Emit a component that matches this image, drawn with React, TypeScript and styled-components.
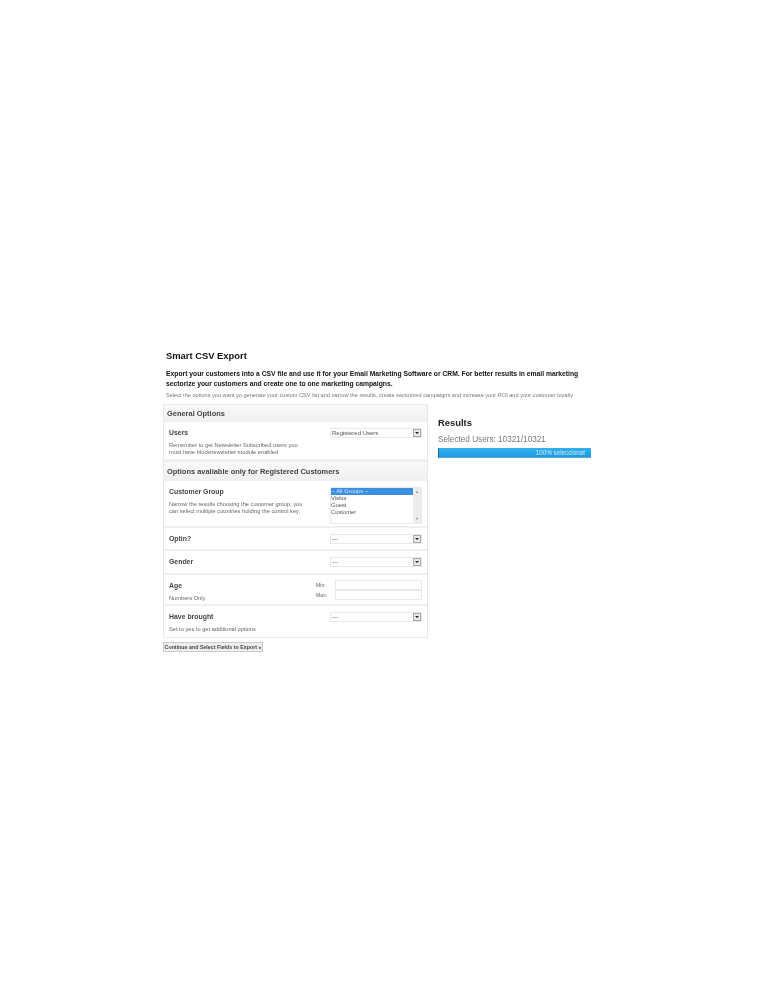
import React from 'react';
import styled, { createGlobalStyle } from 'styled-components';

const GlobalStyle = createGlobalStyle`
  html, body {
    margin: 0;
    padding: 0;
    background: #fff;
  }
  body {
    font-family: "Liberation Sans", Arial, sans-serif;
    color: #333;
  }
`;

const Page = styled.div`
  width: 771px;
  height: 1000px;
  overflow: hidden;
  padding: 349px 0 0 163px;
  box-sizing: border-box;
  filter: blur(0.25px);
`;

const Intro = styled.div`
  padding-left: 3px;
  width: 425px;
`;

const Title = styled.h1`
  margin: 0;
  font-size: 9.4px;
  line-height: 13px;
  font-weight: 700;
  color: #111;
`;

const Lead = styled.p`
  margin: 7px 0 0;
  font-size: 6.75px;
  line-height: 10px;
  font-weight: 700;
  color: #111;
  white-space: nowrap;
`;

const Hint = styled.p`
  margin: 2px 0 0;
  font-size: 5.6px;
  line-height: 9px;
  color: #777;
  white-space: nowrap;
`;

const Columns = styled.div`
  display: flex;
  gap: 10px;
  margin-top: 4px;
`;

const LeftColumn = styled.div`
  width: 265px;
`;

const Panel = styled.div`
  border: 1px solid #e8e8e8;
  border-top: 0;
  box-sizing: border-box;
  height: 234px;
`;

const SectionHeader = styled.div<{ $height: number }>`
  height: ${({ $height }) => $height}px;
  line-height: ${({ $height }) => $height}px;
  padding-left: 3px;
  font-size: 7.45px;
  font-weight: 700;
  color: #444;
  background: linear-gradient(#fafafa, #efefef);
  border-top: 1px solid #ececec;
  box-sizing: border-box;
`;

const Row = styled.div<{ $height: number }>`
  display: flex;
  justify-content: space-between;
  height: ${({ $height }) => $height}px;
  padding: 6px 5px 0 5px;
  box-sizing: border-box;
  border-bottom: 2px solid #f0f0f0;
  &:last-child {
    border-bottom: 0;
  }
`;

const RowText = styled.div`
  width: 145px;
`;

const RowLabel = styled.div`
  font-size: 6.9px;
  line-height: 10px;
  font-weight: 700;
  color: #444;
`;

const RowHelp = styled.div`
  margin-top: 4px;
  font-size: 5.7px;
  line-height: 7.3px;
  color: #666;
  white-space: nowrap;
`;

const Select = styled.div`
  display: flex;
  align-items: center;
  justify-content: space-between;
  width: 89px;
  height: 8px;
  padding-left: 1px;
  border: 1px solid #e8e8e8;
  box-sizing: content-box;
  font-size: 6px;
  color: #555;
`;

const SelectArrow = styled.span`
  display: flex;
  align-items: center;
  justify-content: center;
  width: 8px;
  height: 8px;
  background: #e8e8e8;
  border: 1px solid #aaa;
  box-sizing: border-box;
  &::after {
    content: '';
    border-left: 2px solid transparent;
    border-right: 2px solid transparent;
    border-top: 2px solid #222;
  }
`;

const ListBox = styled.div`
  display: flex;
  width: 90px;
  height: 35px;
  border: 1px solid #e8e8e8;
  font-size: 5.8px;
  line-height: 7px;
  color: #555;
`;

const ListItems = styled.div`
  flex: 1;
`;

const ListItem = styled.div<{ $selected?: boolean }>`
  background: ${({ $selected }) => ($selected ? '#3b8fe0' : 'transparent')};
  color: ${({ $selected }) => ($selected ? '#cfe4fa' : '#555')};
`;

const ListScroll = styled.div`
  display: flex;
  flex-direction: column;
  justify-content: space-between;
  align-items: center;
  width: 8px;
  padding: 2px 0;
  box-sizing: border-box;
  background: #ececec;
  font-size: 4px;
  line-height: 4px;
  color: #888;
`;

const RangeFields = styled.div`
  display: grid;
  grid-template-columns: 18px 87px;
  grid-auto-rows: 10px;
  column-gap: 1px;
  align-items: center;
  align-self: flex-start;
  margin-top: -1px;
`;

const RangeLabel = styled.label`
  font-size: 5.2px;
  color: #666;
`;

const RangeInput = styled.div`
  height: 10px;
  border: 1px solid #e8e8e8;
  box-sizing: border-box;
`;

const SubmitButton = styled.button`
  display: block;
  width: 100px;
  height: 10px;
  margin-top: 4px;
  padding: 0;
  font-family: inherit;
  font-size: 5.3px;
  font-weight: 700;
  line-height: 8px;
  color: #444;
  background: #eeeeee;
  border: 1px solid #cccccc;
  white-space: nowrap;
`;

const Results = styled.div`
  width: 153px;
  padding-top: 13px;
`;

const ResultsTitle = styled.h2`
  margin: 0;
  font-size: 9.4px;
  line-height: 12px;
  font-weight: 700;
  color: #222;
`;

const SelectedUsers = styled.div`
  margin-top: 6px;
  font-size: 8.2px;
  line-height: 10px;
  color: #777;
`;

const ProgressBar = styled.div`
  height: 10px;
  margin-top: 3px;
  padding-right: 6px;
  box-sizing: border-box;
  background: linear-gradient(#35b0ee, #1a9be0);
  border-left: 1px solid #146a9e;
  border-bottom: 1px solid #5ba7d4;
  font-size: 6.3px;
  line-height: 10px;
  text-align: right;
  color: #cdeaf9;
`;

const DropDown: React.FC<{ value: string }> = ({ value }) => (
  <Select>
    {value}
    <SelectArrow />
  </Select>
);

const App: React.FC = () => (
  <Page>
    <GlobalStyle />
    <Intro>
      <Title>Smart CSV Export</Title>
      <Lead>
        Export your customers into a CSV file and use it for your Email Marketing Software or CRM. For better results in email marketing
        <br />
        sectorize your customers and create one to one marketing campaigns.
      </Lead>
      <Hint>
        Select the options you want yo generate your custom CSV list and narrow the results, create sectorized campaigns and increase your ROI and your customer loyalty
      </Hint>
    </Intro>
    <Columns>
      <LeftColumn>
        <Panel>
          <SectionHeader $height={18}>General Options</SectionHeader>
          <Row $height={39}>
            <RowText>
              <RowLabel>Users</RowLabel>
              <RowHelp>
                Remember to get Newsletter Subscribed users you
                <br />
                must have blocknewsletter module enabled
              </RowHelp>
            </RowText>
            <DropDown value="Registered Users" />
          </Row>
          <SectionHeader $height={20}>Options avaliable only for Registered Customers</SectionHeader>
          <Row $height={47}>
            <RowText>
              <RowLabel>Customer Group</RowLabel>
              <RowHelp>
                Narrow the results choosing the customer group, you
                <br />
                can select multiple countries holding the control key.
              </RowHelp>
            </RowText>
            <ListBox>
              <ListItems>
                <ListItem $selected>-- All Groups --</ListItem>
                <ListItem>Visitor</ListItem>
                <ListItem>Guest</ListItem>
                <ListItem>Customer</ListItem>
              </ListItems>
              <ListScroll>
                <span>▴</span>
                <span>▾</span>
              </ListScroll>
            </ListBox>
          </Row>
          <Row $height={23}>
            <RowLabel>Optin?</RowLabel>
            <DropDown value="---" />
          </Row>
          <Row $height={24}>
            <RowLabel>Gender</RowLabel>
            <DropDown value="---" />
          </Row>
          <Row $height={31}>
            <RowText>
              <RowLabel>Age</RowLabel>
              <RowHelp>Numbers Only</RowHelp>
            </RowText>
            <RangeFields>
              <RangeLabel>Min:</RangeLabel>
              <RangeInput />
              <RangeLabel>Max:</RangeLabel>
              <RangeInput />
            </RangeFields>
          </Row>
          <Row $height={31}>
            <RowText>
              <RowLabel>Have brought</RowLabel>
              <RowHelp>Set to yes to get additional options</RowHelp>
            </RowText>
            <DropDown value="---" />
          </Row>
        </Panel>
        <SubmitButton>Continue and Select Fields to Export »</SubmitButton>
      </LeftColumn>
      <Results>
        <ResultsTitle>Results</ResultsTitle>
        <SelectedUsers>Selected Users: 10321/10321</SelectedUsers>
        <ProgressBar>100% seleccionat</ProgressBar>
      </Results>
    </Columns>
  </Page>
);

export default App;
